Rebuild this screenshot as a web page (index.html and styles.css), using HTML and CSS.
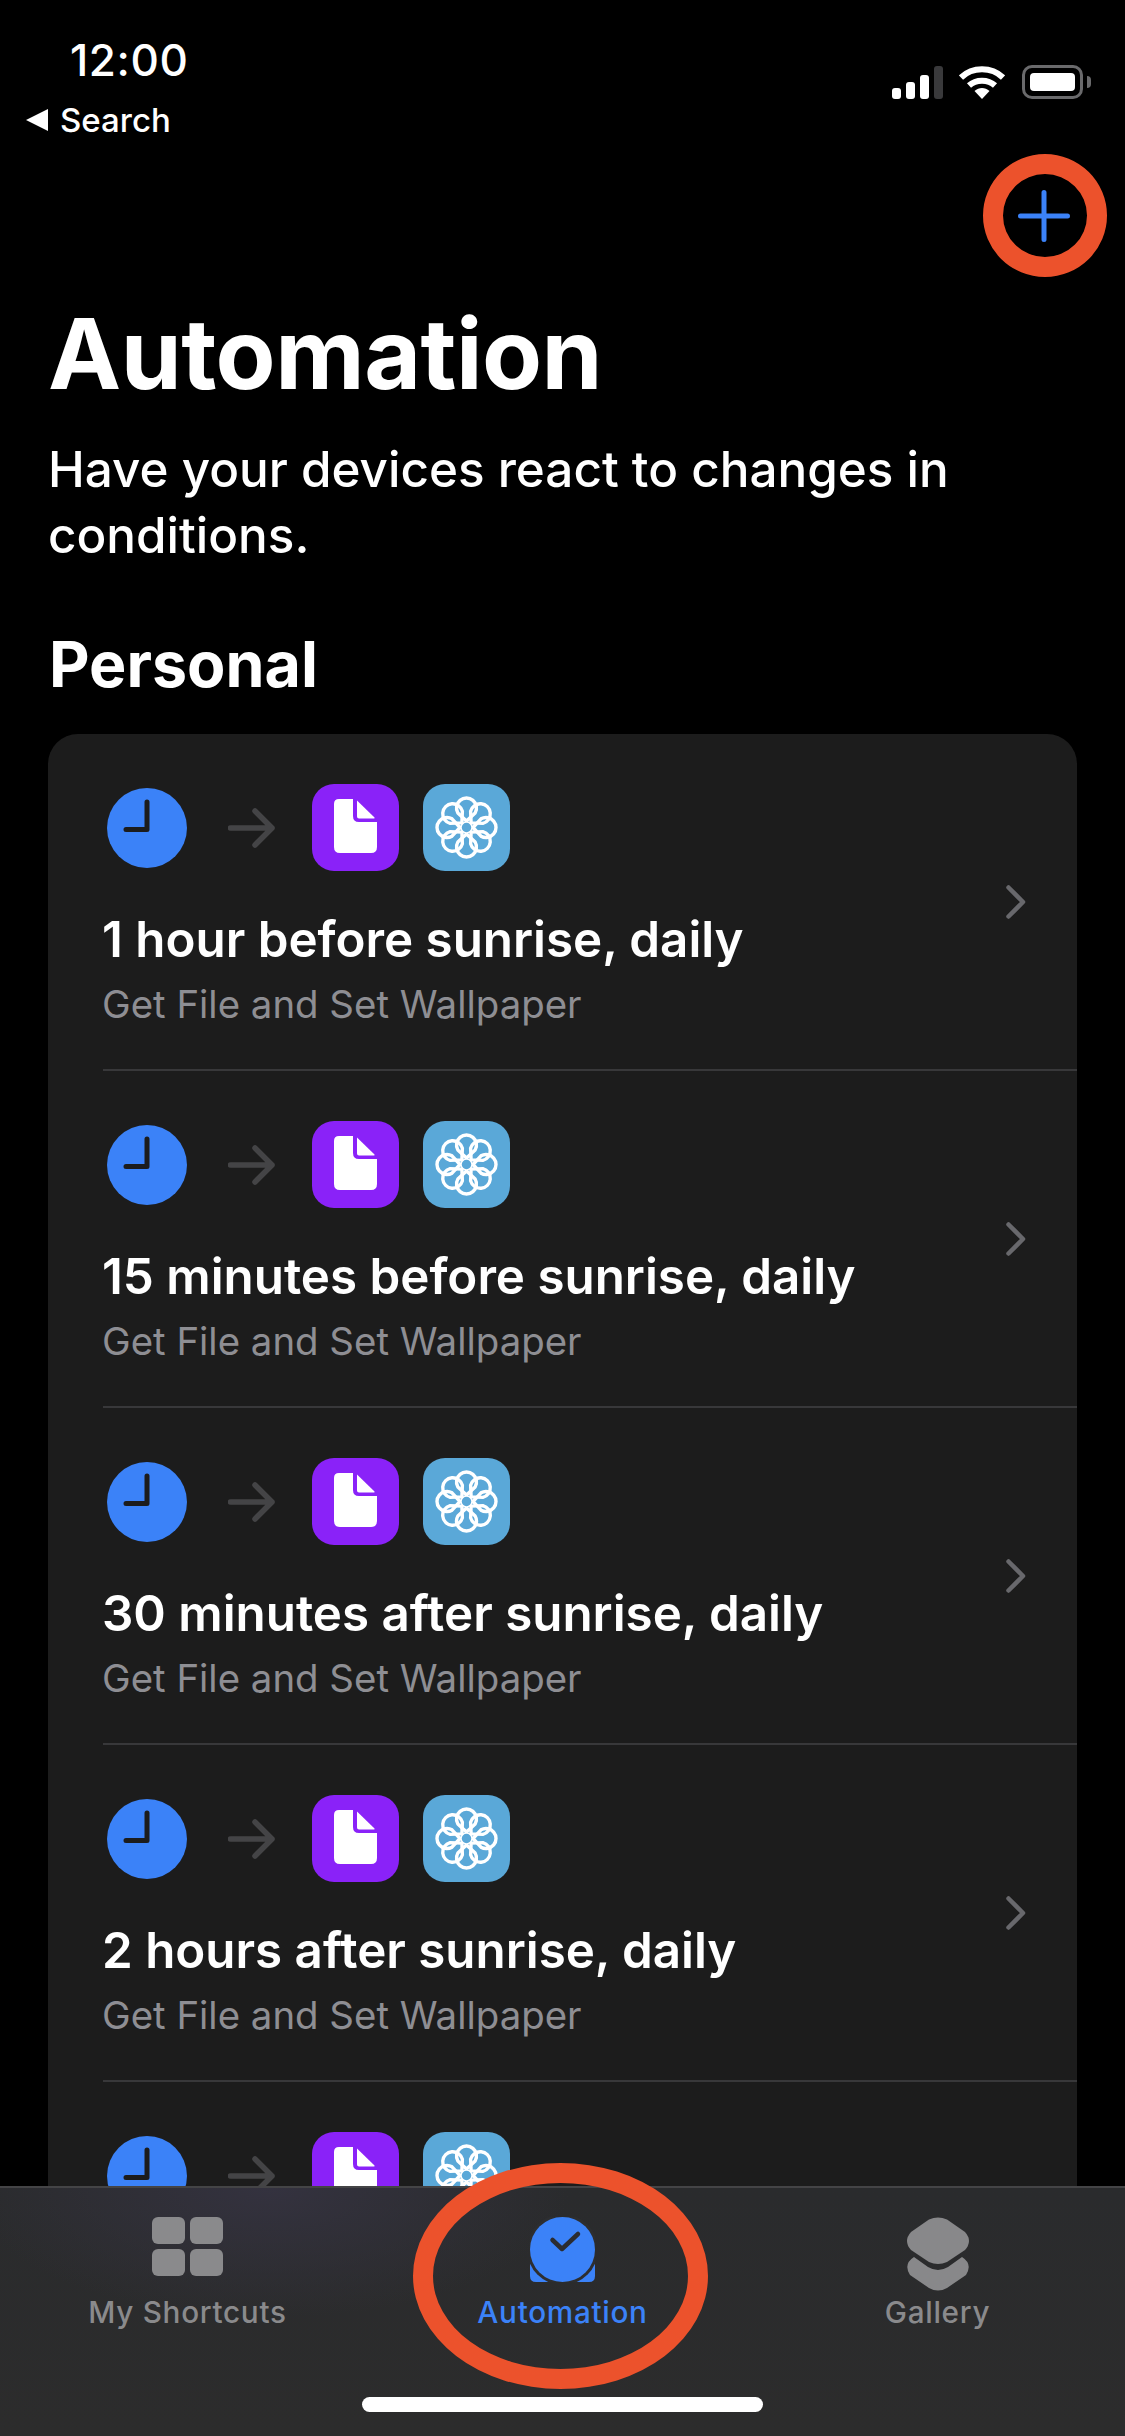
FILE: index.html
```html
<!DOCTYPE html>
<html lang="en">
<head>
<meta charset="utf-8">
<title>Automation</title>
<link rel="stylesheet" href="styles.css">
</head>
<body>
<svg class="defs" width="0" height="0" aria-hidden="true">
  <defs>
    <symbol id="clock" viewBox="0 0 80 80">
      <circle cx="40" cy="40" r="40" fill="#3b82f8"/>
      <path d="M40 14V41.500H19" fill="none" stroke="#1c1c1c" stroke-width="5" stroke-linecap="round" stroke-linejoin="round"/>
    </symbol>
    <symbol id="arrow" viewBox="0 0 48 40">
      <path d="M2.500 20H44M27 3L44 20L27 37" fill="none" stroke="#444446" stroke-width="5.500" stroke-linecap="round" stroke-linejoin="round"/>
    </symbol>
    <symbol id="file" viewBox="0 0 87 87">
      <rect width="87" height="87" rx="22" fill="#8a22f8"/>
      <path d="M27 15H41V32Q41 38 47 38H65V63Q65 69 59 69H28Q22 69 22 63V20Q22 15 27 15Z" fill="#fff"/>
      <path d="M45 16.500L62.500 33.500Q63 34.500 62 34.500H47Q45 34.500 45 32.500Z" fill="#fff"/>
    </symbol>
    <symbol id="flower" viewBox="0 0 87 87">
      <rect width="87" height="87" rx="22" fill="#5aa8d8"/>
      <g fill="none" stroke="#fff" stroke-width="3.400" stroke-linejoin="round">
        <path id="petal" d="M34.840 29A10 10 0 1 1 52.160 29L43.500 37Z"/>
        <use href="#petal" transform="rotate(45 43.500 43.500)"/>
        <use href="#petal" transform="rotate(90 43.500 43.500)"/>
        <use href="#petal" transform="rotate(135 43.500 43.500)"/>
        <use href="#petal" transform="rotate(180 43.500 43.500)"/>
        <use href="#petal" transform="rotate(225 43.500 43.500)"/>
        <use href="#petal" transform="rotate(270 43.500 43.500)"/>
        <use href="#petal" transform="rotate(315 43.500 43.500)"/>
      </g>
      <circle cx="43.500" cy="43.500" r="5.500" fill="#5aa8d8" stroke="#fff" stroke-width="1.500"/>
    </symbol>
    <symbol id="chevron" viewBox="0 0 22 36">
      <path d="M3.500 3.500L18 18L3.500 32.500" fill="none" stroke="#68686c" stroke-width="4.500" stroke-linecap="round" stroke-linejoin="round"/>
    </symbol>
  </defs>
</svg>

<main class="screen">
  <header class="status">
    <div class="status-left">
      <div class="time">12:00</div>
      <div class="back"><span class="back-tri"></span><span>Search</span></div>
    </div>
    <div class="status-right">
      <div class="signal"><i class="b1"></i><i class="b2"></i><i class="b3"></i><i class="b4"></i></div>
      <svg class="wifi" viewBox="0 0 46 33">
        <path d="M2 11.500C13.500 .5 32.500 .5 44 11.500" fill="none" stroke="#fff" stroke-width="6"/>
        <path d="M10 19.500C17 13 29 13 36 19.500" fill="none" stroke="#fff" stroke-width="6"/>
        <path d="M15.500 25C20 21 26 21 30.500 25L23 33Z" fill="#fff"/>
      </svg>
      <div class="battery"><div class="battery-fill"></div></div>
      <div class="battery-nub"></div>
    </div>
  </header>

  <div class="nav">
    <svg class="plus" viewBox="0 0 52 52"><path d="M26 2.500V49.500M2.500 26H49.500" fill="none" stroke="#3b82f8" stroke-width="5" stroke-linecap="round"/></svg>
  </div>

  <h1 class="title">Automation</h1>
  <p class="lead">Have your devices react to changes in conditions.</p>
  <h2 class="section">Personal</h2>

  <section class="card">
    <article class="row">
      <div class="row-main">
        <div class="flow">
          <svg class="ic-clock"><use href="#clock"/></svg>
          <svg class="ic-arrow"><use href="#arrow"/></svg>
          <svg class="ic-app"><use href="#file"/></svg>
          <svg class="ic-app"><use href="#flower"/></svg>
        </div>
        <div class="row-title">1 hour before sunrise, daily</div>
        <div class="row-sub">Get File and Set Wallpaper</div>
      </div>
      <svg class="chev"><use href="#chevron"/></svg>
    </article>
    <article class="row">
      <div class="row-main">
        <div class="flow">
          <svg class="ic-clock"><use href="#clock"/></svg>
          <svg class="ic-arrow"><use href="#arrow"/></svg>
          <svg class="ic-app"><use href="#file"/></svg>
          <svg class="ic-app"><use href="#flower"/></svg>
        </div>
        <div class="row-title">15 minutes before sunrise, daily</div>
        <div class="row-sub">Get File and Set Wallpaper</div>
      </div>
      <svg class="chev"><use href="#chevron"/></svg>
    </article>
    <article class="row">
      <div class="row-main">
        <div class="flow">
          <svg class="ic-clock"><use href="#clock"/></svg>
          <svg class="ic-arrow"><use href="#arrow"/></svg>
          <svg class="ic-app"><use href="#file"/></svg>
          <svg class="ic-app"><use href="#flower"/></svg>
        </div>
        <div class="row-title">30 minutes after sunrise, daily</div>
        <div class="row-sub">Get File and Set Wallpaper</div>
      </div>
      <svg class="chev"><use href="#chevron"/></svg>
    </article>
    <article class="row">
      <div class="row-main">
        <div class="flow">
          <svg class="ic-clock"><use href="#clock"/></svg>
          <svg class="ic-arrow"><use href="#arrow"/></svg>
          <svg class="ic-app"><use href="#file"/></svg>
          <svg class="ic-app"><use href="#flower"/></svg>
        </div>
        <div class="row-title">2 hours after sunrise, daily</div>
        <div class="row-sub">Get File and Set Wallpaper</div>
      </div>
      <svg class="chev"><use href="#chevron"/></svg>
    </article>
    <article class="row">
      <div class="row-main">
        <div class="flow">
          <svg class="ic-clock"><use href="#clock"/></svg>
          <svg class="ic-arrow"><use href="#arrow"/></svg>
          <svg class="ic-app"><use href="#file"/></svg>
          <svg class="ic-app"><use href="#flower"/></svg>
        </div>
      </div>
    </article>
  </section>

  <nav class="tabbar">
    <div class="tab">
      <div class="tab-icon grid-icon"><i></i><i></i><i></i><i></i></div>
      <span class="tab-label">My Shortcuts</span>
    </div>
    <div class="tab tab-active">
      <svg class="tab-icon" viewBox="0 0 65 65" width="65" height="65">
        <path d="M0 40H65V59Q65 65 59 65H6Q0 65 0 59Z" fill="#3b82f8"/>
        <circle cx="32.500" cy="32.500" r="35.500" fill="#2d2e30"/>
        <circle cx="32.500" cy="32.500" r="32.500" fill="#3b82f8"/>
        <path d="M22.500 23L32 32L48 17" fill="none" stroke="#2b2c30" stroke-width="4.500" stroke-linecap="round" stroke-linejoin="round"/>
      </svg>
      <span class="tab-label">Automation</span>
    </div>
    <div class="tab">
      <svg class="tab-icon" viewBox="0 0 64 74" width="64" height="74">
        <path d="M23 2.500Q32 -1.500 41 2.500L59 15Q67 24 59 33L41 45Q32 49 23 45L5 33Q-3 24 5 15Z" fill="#88888a"/>
        <path d="M8 40L22 50Q32 56 42 50L56 40Q67 47 60 58L41 71Q32 76 23 71L4 58Q-3 47 8 40Z" fill="#88888a"/>
      </svg>
      <span class="tab-label">Gallery</span>
    </div>
    <div class="home-bar"></div>
  </nav>

  <div class="ring ring-plus"></div>
  <div class="ring ring-tab"></div>
</main>
</body>
</html>
```

FILE: styles.css
```css
* { box-sizing: border-box; }
html, body { margin: 0; padding: 0; background: #000; }
body { width: 1125px; height: 2436px; overflow: hidden; font-family: Inter, "Liberation Sans", sans-serif; color: #fff; }
.defs { position: absolute; }
.screen { position: relative; width: 1125px; height: 2436px; overflow: hidden; background: #000; }

.status { display: flex; justify-content: space-between; align-items: flex-start; height: 140px; padding: 0 34px 0 26px; }
.status-left { display: flex; flex-direction: column; padding-top: 34px; }
.time { font-size: 44px; line-height: 53px; font-weight: 500; margin-left: 44px; letter-spacing: 0.6px; }
.back { display: flex; align-items: center; gap: 12px; font-size: 33px; line-height: 40px; font-weight: 500; margin-top: 13px; }
.back-tri { width: 0; height: 0; border-style: solid; border-width: 11px 22px 11px 0; border-color: transparent #fff transparent transparent; }
.status-right { display: flex; align-items: flex-end; padding-top: 65px; height: 99px; }
.signal { display: flex; align-items: flex-end; gap: 5px; height: 33px; }
.signal i { display: block; width: 9px; border-radius: 3px; background: #fff; }
.signal .b1 { height: 11px; }
.signal .b2 { height: 17px; }
.signal .b3 { height: 24px; }
.signal .b4 { height: 33px; background: #39393b; }
.wifi { width: 46px; height: 33px; margin-left: 16px; }
.battery { width: 61px; height: 34px; margin-left: 17px; padding: 5px; border: 3px solid #6a6a6c; border-radius: 10px; }
.battery-fill { height: 100%; border-radius: 4px; background: #fff; }
.battery-nub { width: 4px; height: 12px; margin: 0 0 11px 4px; background: #6a6a6c; border-radius: 0 4px 4px 0; }

.nav { display: flex; justify-content: flex-end; height: 155px; padding: 50px 55px 0 0; }
.plus { width: 52px; height: 52px; }

.title { margin: 0 0 0 48px; font-size: 98px; line-height: 118px; font-weight: 700; letter-spacing: -0.5px; }
.lead { margin: 23px 40px 0 48px; font-size: 49.4px; line-height: 66px; font-weight: 500; }
.section { margin: 54px 0 0 49px; font-size: 62.7px; line-height: 85px; font-weight: 700; }

.card { margin: 27px 48px 0; background: #1c1c1c; border-radius: 30px; overflow: hidden; }
.row { display: flex; align-items: center; height: 337px; margin-left: 55px; padding: 0 50px 0 0; border-bottom: 2px solid #38383a; }
.row:last-child { border-bottom: 0; }
.row-main { flex: 1; align-self: flex-start; padding-top: 50px; }
.flow { display: flex; align-items: center; height: 87px; padding-left: 4px; }
.ic-clock { width: 80px; height: 80px; flex: none; }
.ic-arrow { width: 48px; height: 40px; flex: none; margin: 0 36px 0 41px; }
.ic-app { width: 87px; height: 87px; flex: none; margin-right: 24px; }
.row-title { margin-top: 38px; margin-left: -1px; font-size: 49.3px; line-height: 60px; font-weight: 600; white-space: nowrap; }
.row-sub { margin-top: 11px; margin-left: -1px; font-size: 38.4px; line-height: 49px; font-weight: 400; color: #8e8e93; white-space: nowrap; }
.chev { width: 22px; height: 36px; flex: none; }

.tabbar { position: absolute; left: 0; right: 0; bottom: 0; height: 250px; display: grid; grid-template-columns: 375px 375px 375px; border-top: 2px solid #444446; background: radial-gradient(ellipse 300px 130px at 270px 0, #34323f 0%, rgba(51,50,64,0) 100%), linear-gradient(180deg, #2a2b2d, #2c2c2c); }
.tab { display: flex; flex-direction: column; align-items: center; padding-top: 29px; }
.tab-icon { flex: none; }
.grid-icon { display: grid; grid-template-columns: 32.5px 32.5px; grid-template-rows: 26.5px 26.5px; gap: 5.5px; width: 71px; height: 58px; }
.grid-icon i { display: block; background: #8a8a8c; border-radius: 6px; }
.tab-label { position: absolute; top: 106px; font-size: 29.7px; line-height: 36px; font-weight: 500; color: #8a8a8c; letter-spacing: 0.7px; }
.tab-active .tab-label { color: #3b82f8; }
.home-bar { position: absolute; left: 362px; bottom: 24px; width: 401px; height: 15px; border-radius: 8px; background: #fff; }

.ring { position: absolute; border-style: solid; border-color: #ec522c; border-radius: 50%; }
.ring-plus { left: 983px; top: 154px; width: 124px; height: 123px; border-width: 20px; }
.ring-tab { left: 413px; top: 2163px; width: 295px; height: 226px; border-width: 20px; }
```
